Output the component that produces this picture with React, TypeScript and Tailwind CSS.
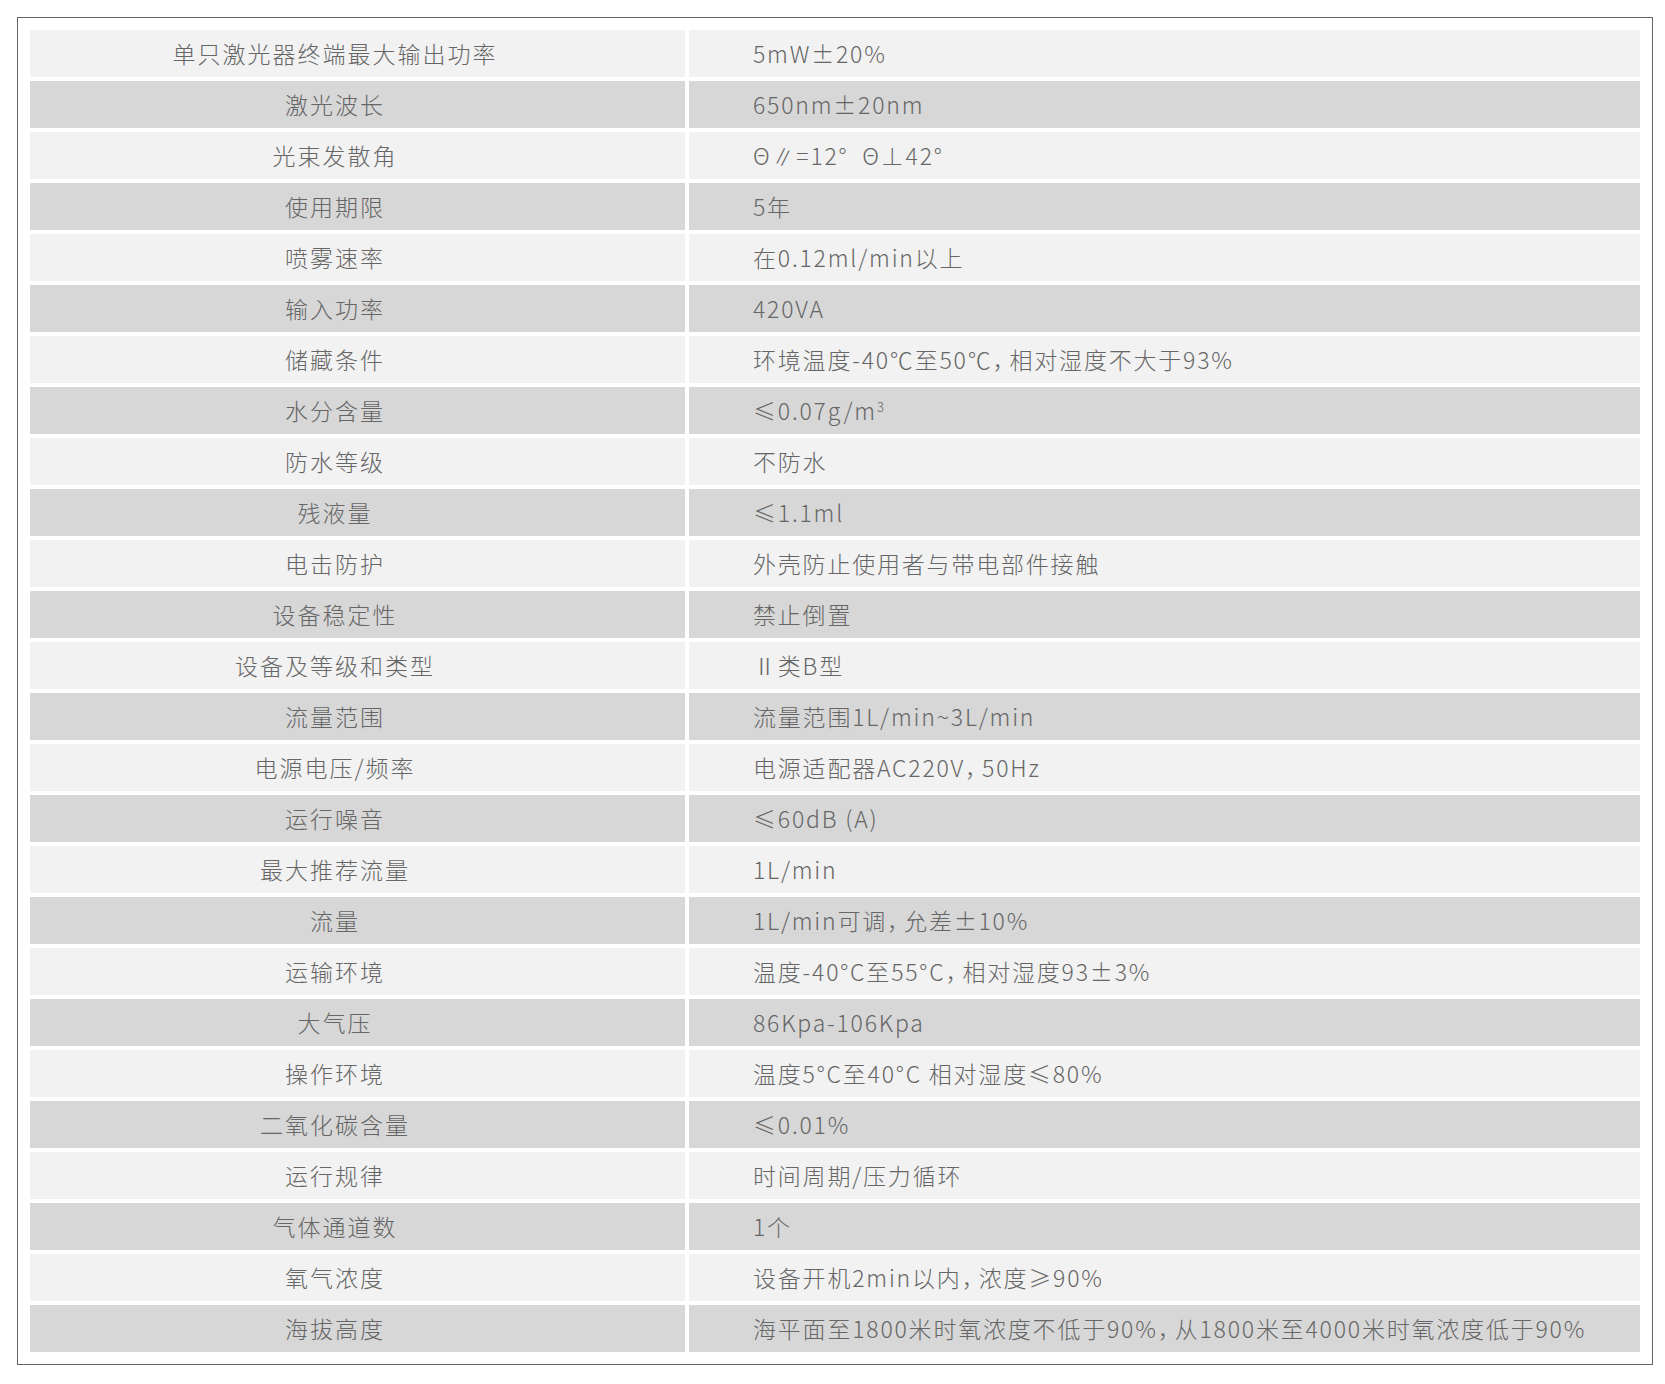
import React from 'react';

// full-width comma rendered narrower, like the reference font
const c = <span className="tracking-[-6px]">，</span>;

const rows: [string, React.ReactNode][] = [
  ['单只激光器终端最大输出功率', '5mW±20%'],
  ['激光波长', '650nm±20nm'],
  ['光束发散角', 'Θ∥=12°  Θ⊥42°'],
  ['使用期限', '5年'],
  ['喷雾速率', '在0.12ml/min以上'],
  ['输入功率', '420VA'],
  ['储藏条件', <>环境温度-40℃至50℃{c}相对湿度不大于93%</>],
  ['水分含量', <>≤0.07g/m<sup className="text-[13px] relative -top-[8px]">3</sup></>],
  ['防水等级', '不防水'],
  ['残液量', '≤1.1ml'],
  ['电击防护', '外壳防止使用者与带电部件接触'],
  ['设备稳定性', '禁止倒置'],
  ['设备及等级和类型', 'Ⅱ类B型'],
  ['流量范围', '流量范围1L/min~3L/min'],
  ['电源电压/频率', <>电源适配器AC220V{c}50Hz</>],
  ['运行噪音', '≤60dB (A)'],
  ['最大推荐流量', '1L/min'],
  ['流量', <>1L/min可调{c}允差±10%</>],
  ['运输环境', <>温度-40°C至55°C{c}相对湿度93±3%</>],
  ['大气压', '86Kpa-106Kpa'],
  ['操作环境', '温度5°C至40°C 相对湿度≤80%'],
  ['二氧化碳含量', '≤0.01%'],
  ['运行规律', '时间周期/压力循环'],
  ['气体通道数', '1个'],
  ['氧气浓度', <>设备开机2min以内{c}浓度≥90%</>],
  ['海拔高度', <>海平面至1800米时氧浓度不低于90%{c}从1800米至4000米时氧浓度低于90%</>],
];

export default function App() {
  return (
    <div className="min-h-screen bg-white pt-[17px] pl-[17px]">
      <div
        className="w-[1636px] border border-[#666] px-3 pt-3 pb-3 text-[#666] text-[23px] font-light"
        style={{ fontFamily: '"Noto Sans CJK SC", "Noto Sans", sans-serif' }}
      >
        <div className="flex flex-col gap-1">
          {rows.map(([k, v], i) => {
            const bg = i % 2 === 0 ? 'bg-[#f2f2f2]' : 'bg-[#d7d7d7]';
            return (
              <div key={i} className="flex gap-1 h-[47px]">
                <div className={`${bg} w-[655px] shrink-0 flex items-center justify-center pr-[45px] tracking-[2px] whitespace-nowrap`}>
                  {k}
                </div>
                <div className={`${bg} flex-1 flex items-center pl-[64px] tracking-[1.8px] whitespace-pre`}>
                  <span>{v}</span>
                </div>
              </div>
            );
          })}
        </div>
      </div>
    </div>
  );
}
